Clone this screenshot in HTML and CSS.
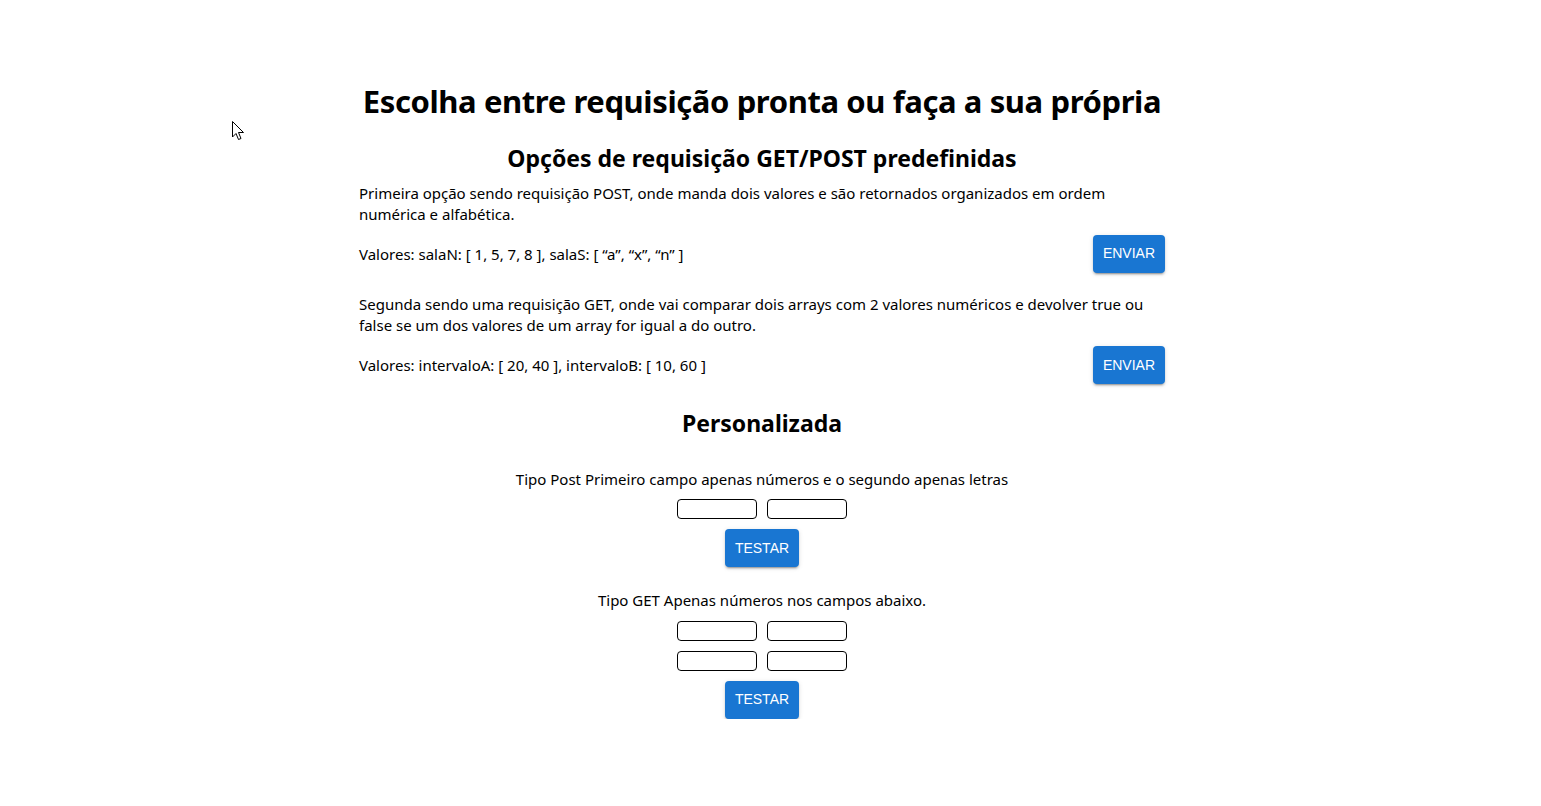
FILE: index.html
```html
<!DOCTYPE html>
<html lang="pt-BR">
<head>
<meta charset="utf-8">
<title>Requisições</title>
<link rel="stylesheet" href="styles.css">
</head>
<body>
<div class="page">
  <main class="container">
    <h1 class="title">Escolha entre requisição pronta ou faça a sua própria</h1>
    <h2 class="subtitle">Opções de requisição GET/POST predefinidas</h2>
    <p class="desc">Primeira opção sendo requisição POST, onde manda dois valores e são retornados organizados em ordem numérica e alfabética.</p>
    <div class="row">
      <span class="values">Valores: salaN: [ 1, 5, 7, 8 ], salaS: [ “a”, “x”, “n” ]</span>
      <button class="btn">ENVIAR</button>
    </div>
    <p class="desc desc-2">Segunda sendo uma requisição GET, onde vai comparar dois arrays com 2 valores numéricos e devolver true ou false se um dos valores de um array for igual a do outro.</p>
    <div class="row">
      <span class="values">Valores: intervaloA: [ 20, 40 ], intervaloB: [ 10, 60 ]</span>
      <button class="btn">ENVIAR</button>
    </div>
    <h2 class="subtitle custom">Personalizada</h2>
    <section class="form form-post">
      <p class="form-label">Tipo Post Primeiro campo apenas números e o segundo apenas letras</p>
      <div class="inputs"><input class="field" type="text"><input class="field" type="text"></div>
      <button class="btn">TESTAR</button>
    </section>
    <section class="form form-get">
      <p class="form-label">Tipo GET Apenas números nos campos abaixo.</p>
      <div class="inputs"><input class="field" type="text"><input class="field" type="text"></div>
      <div class="inputs"><input class="field" type="text"><input class="field" type="text"></div>
      <button class="btn">TESTAR</button>
    </section>
  </main>
</div>
<svg class="cursor" width="13" height="20" viewBox="0 0 13 20"><path d="M0.5 0.5 L0.5 16 L4 12.5 L6.5 18.5 L9 17.5 L6.5 11.5 L11.5 11.5 Z" fill="#fff" stroke="#000" stroke-width="1"/></svg>
</body>
</html>
```

FILE: styles.css
```css
html, body {
  margin: 0;
  padding: 0;
  background: #fff;
}
body {
  font-family: "Noto Sans", "Open Sans", sans-serif;
  color: #000;
}
.page {
  width: 1524px;
  display: flex;
  justify-content: center;
}
.container {
  width: 806px;
  padding-top: 81px;
  display: flex;
  flex-direction: column;
}
.title {
  margin: 0;
  font-size: 31px;
  letter-spacing: -0.4px;
  line-height: 40px;
  font-weight: 700;
  text-align: center;
  white-space: nowrap;
}
.subtitle {
  margin: 22px 0 0;
  font-size: 23px;
  line-height: 30px;
  font-weight: 700;
  text-align: center;
}
.desc {
  margin: 9.5px 0 0;
  font-size: 15px;
  line-height: 21px;
}
.desc-2 {
  margin-top: 21.5px;
}
.row {
  margin-top: 10px;
  display: flex;
  justify-content: space-between;
  align-items: center;
  font-size: 15px;
}
.btn {
  font-family: "Liberation Sans", Arial, sans-serif;
  font-size: 14px;
  font-weight: 400;
  line-height: 24.5px;
  height: 38px;
  padding: 6px 10px;
  border: 0;
  border-radius: 4px;
  background: #1976d2;
  color: #fff;
  box-shadow: 0 3px 1px -2px rgba(0,0,0,0.2), 0 2px 2px 0 rgba(0,0,0,0.14), 0 1px 5px 0 rgba(0,0,0,0.12);
}
.custom {
  margin-top: 24px;
}
.form {
  display: flex;
  flex-direction: column;
  align-items: center;
}
.form-post {
  margin-top: 30.5px;
}
.form-get {
  margin-top: 23px;
}
.form-label {
  margin: 0 0 9.5px;
  font-size: 15px;
  line-height: 21px;
}
.inputs {
  display: flex;
  gap: 10px;
  margin-bottom: 10px;
}
.field {
  box-sizing: border-box;
  width: 80px;
  height: 20px;
  border: 1px solid #000;
  border-radius: 4px;
  padding: 0 4px;
  margin: 0;
  background: #fff;
}
.cursor {
  position: absolute;
  left: 232px;
  top: 121px;
}
```
